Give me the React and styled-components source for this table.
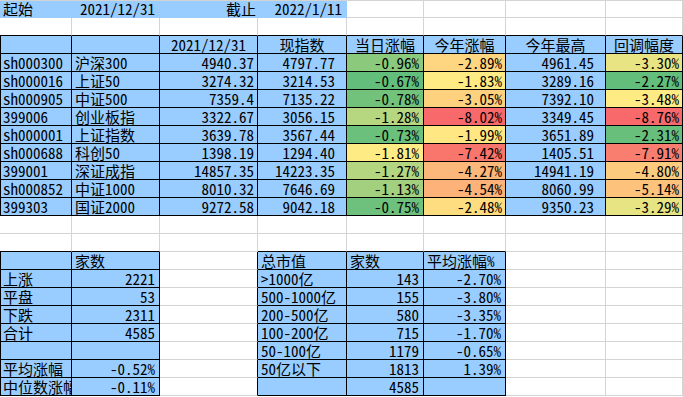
import React from 'react'
import styled, { createGlobalStyle } from 'styled-components'

const GlobalStyle = createGlobalStyle`
  html, body {
    margin: 0;
    padding: 0;
    background: #fff;
  }
  body {
    font-family: "Noto Sans Mono CJK SC", "Noto Sans CJK SC", monospace;
  }
`

const COLS = [72, 88, 98, 89, 77, 82, 100, 77]
const BLUE = '#99ccff'
const GRID = '#d4d4d4'

const Sheet = styled.div`
  display: grid;
  grid-template-columns: ${COLS.map(w => w + 'px').join(' ')};
  grid-template-rows: 17px repeat(21, 18px);
  width: 683px;
  border-top: 1px solid ${GRID};
  overflow: hidden;
`

const Cell = styled.div`
  box-sizing: border-box;
  display: flex;
  align-items: flex-end;
  justify-content: ${p => p.$align === 'right' ? 'flex-end' : p.$align === 'center' ? 'center' : 'flex-start'};
  padding: 0 ${p => p.$pr}px 0 3px;
  background: ${p => p.$bg || '#fff'};
  border-right: 1px solid ${p => p.$rb};
  border-bottom: 1px solid ${p => p.$bb};
  box-shadow: ${p => p.$lb ? 'inset 1px 0 0 #000' : 'none'};
  font-size: 15px;
  line-height: 17px;
  color: #000;
  white-space: nowrap;
  overflow: ${p => p.$clip ? 'hidden' : 'visible'};
`

const indices = [
  ['sh000300', '沪深300', '4940.37', '4797.77', '-0.96%', '-2.89%', '4961.45', '-3.30%'],
  ['sh000016', '上证50', '3274.32', '3214.53', '-0.67%', '-1.83%', '3289.16', '-2.27%'],
  ['sh000905', '中证500', '7359.4', '7135.22', '-0.78%', '-3.05%', '7392.10', '-3.48%'],
  ['399006', '创业板指', '3322.67', '3056.15', '-1.28%', '-8.02%', '3349.45', '-8.76%'],
  ['sh000001', '上证指数', '3639.78', '3567.44', '-0.73%', '-1.99%', '3651.89', '-2.31%'],
  ['sh000688', '科创50', '1398.19', '1294.40', '-1.81%', '-7.42%', '1405.51', '-7.91%'],
  ['399001', '深证成指', '14857.35', '14223.35', '-1.27%', '-4.27%', '14941.19', '-4.80%'],
  ['sh000852', '中证1000', '8010.32', '7646.69', '-1.13%', '-4.54%', '8060.99', '-5.14%'],
  ['399303', '国证2000', '9272.58', '9042.18', '-0.75%', '-2.48%', '9350.23', '-3.29%'],
]

// colour scale fills, per column
const scale = {
  4: ['#8bc97d', '#63be7b', '#72c27c', '#b6d680', '#6bc07b', '#ffeb84', '#b5d680', '#a2d07f', '#6ec17c'],
  5: ['#fed580', '#ffeb84', '#fed17f', '#f8696b', '#ffe883', '#f9766d', '#fcb87a', '#fcb279', '#fedd81'],
  7: ['#e8e483', '#63be7b', '#ffeb84', '#f8696b', '#68bf7b', '#f97e6f', '#fdcb7e', '#fdc27c', '#e7e483'],
}

const breadth = [
  ['', '家数'],
  ['上涨', '2221'],
  ['平盘', '53'],
  ['下跌', '2311'],
  ['合计', '4585'],
  ['', ''],
  ['平均涨幅', '-0.52%'],
  ['中位数涨幅', '-0.11%'],
]

const bySize = [
  ['总市值', '家数', '平均涨幅%'],
  ['>1000亿', '143', '-2.70%'],
  ['500-1000亿', '155', '-3.80%'],
  ['200-500亿', '580', '-3.35%'],
  ['100-200亿', '715', '-1.70%'],
  ['50-100亿', '1179', '-0.65%'],
  ['50亿以下', '1813', '1.39%'],
  ['', '4585', ''],
]

const tables = [
  { r0: 2, r1: 11, c0: 0, c1: 7 },
  { r0: 14, r1: 21, c0: 0, c1: 1 },
  { r0: 14, r1: 21, c0: 3, c1: 5 },
]

const inTable = (r, c) => tables.some(t => r >= t.r0 && r <= t.r1 && c >= t.c0 && c <= t.c1)

const buildCells = () => {
  const g = Array.from({ length: 22 }, () =>
    Array.from({ length: 8 }, () => ({ t: '', a: 'left', bg: null, pr: 3 }))
  )
  const set = (r, c, t, a = 'left', bg = BLUE, pr = 3) => { g[r][c] = { t, a, bg, pr } }

  set(0, 0, '起始')
  set(0, 1, '2021/12/31', 'right', BLUE, 4)
  set(0, 2, '截止', 'right', BLUE, 1)
  set(0, 3, '2022/1/11', 'right', BLUE, 4)

  const heads = ['', '', '2021/12/31', '现指数', '当日涨幅', '今年涨幅', '今年最高', '回调幅度']
  heads.forEach((h, c) => set(2, c, h, 'center'))

  indices.forEach((row, i) => {
    row.forEach((t, c) => {
      if (c < 2) set(3 + i, c, t)
      else if (scale[c]) set(3 + i, c, t, 'right', scale[c][i], c === 4 ? 4 : 3)
      else set(3 + i, c, t, 'right', BLUE, c === 2 ? 3 : 11)
    })
  })

  breadth.forEach(([k, v], i) => {
    set(14 + i, 0, k)
    set(14 + i, 1, v, i === 0 ? 'left' : 'right', BLUE, 4)
  })
  // long label is cut at the column edge, as in the sheet
  g[21][0].clip = true

  bySize.forEach((row, i) => {
    row.forEach((t, j) => set(14 + i, 3 + j, t, i === 0 || j === 0 ? 'left' : 'right', BLUE, 4))
  })

  return g
}

const cells = buildCells()

const App = () => (
  <>
    <GlobalStyle />
    <Sheet>
      {cells.map((row, r) =>
        row.map((cell, c) => {
          const rb = inTable(r, c) || inTable(r, c + 1) ? '#000' : cell.bg || GRID
          const bb = inTable(r, c) || inTable(r + 1, c) ? '#000' : cell.bg || GRID
          return (
            <Cell
              key={`${r}-${c}`}
              $align={cell.a}
              $bg={cell.bg}
              $pr={cell.pr}
              $rb={rb}
              $bb={bb}
              $lb={c === 0 && inTable(r, c)}
              $clip={cell.clip}
            >
              {cell.t}
            </Cell>
          )
        })
      )}
    </Sheet>
  </>
)

export default App
